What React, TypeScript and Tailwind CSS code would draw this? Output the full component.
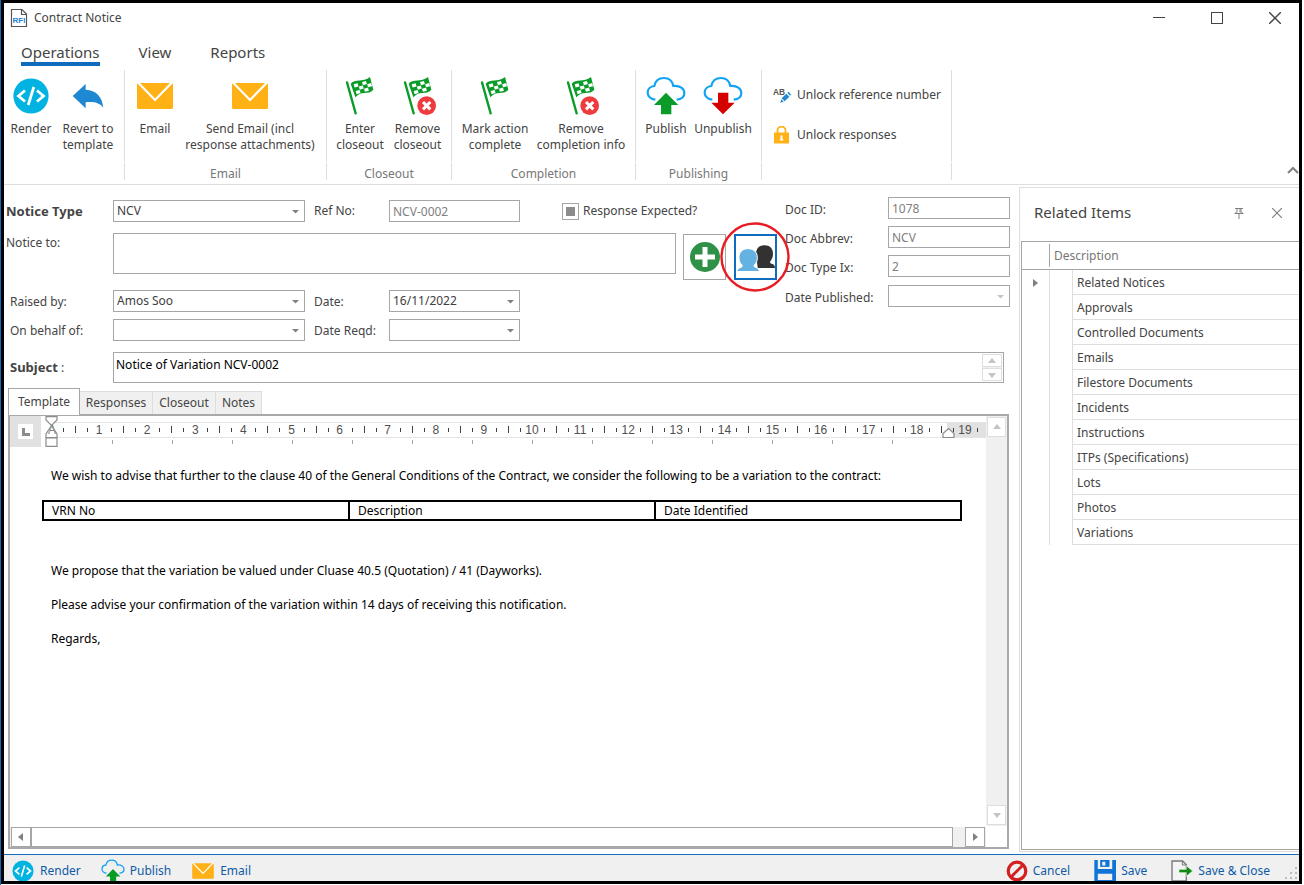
import React from "react";

/* ---------- icons ---------- */

type IconProps = { className?: string };

function RfiIcon() {
  return (
    <svg className="h-5 w-[18px]" viewBox="0 0 18 20" aria-hidden="true">
      <path d="M1.5 1.5h10.5l4.5 4.5v12.5h-15z" fill="#fff" stroke="#555" strokeWidth="1.2" />
      <path d="M11.5 1.5v5h5" fill="none" stroke="#555" strokeWidth="1.2" />
      <rect x="2" y="8" width="14" height="7" fill="#fff" />
      <text x="9" y="15" textAnchor="middle" fontSize="8" fontWeight="700" fill="#1f7fd6" fontFamily="Liberation Sans, sans-serif">
        RFI
      </text>
    </svg>
  );
}

function RenderIcon({ className }: IconProps) {
  return (
    <svg className={className} viewBox="-2 -2 40 40" aria-hidden="true">
      <circle cx="18" cy="18" r="17.6" fill="#00b3e1" />
      <path d="M12 12.5 5.5 18l6.500 5.500M24 12.500l6.500 5.500-6.500 5.500M20.800 9l-5.600 18" fill="none" stroke="#fff" strokeWidth="2.800" />
    </svg>
  );
}

function RevertIcon({ className }: IconProps) {
  return (
    <svg className={className} viewBox="-6 -6 120 120" aria-hidden="true">
      <path d="M8 54 47 18v17c32 1 50 22 53 54-14-17-30-18-53-16v18z" fill="#1e88d2" />
    </svg>
  );
}

function MailIcon({ className }: IconProps) {
  return (
    <svg className={className} viewBox="-2 -2 40 40" aria-hidden="true">
      <rect x="0" y="5" width="36" height="26" rx="1.5" fill="#ffb115" />
      <path d="M1 4.500 18 22 35 4.500" fill="none" stroke="#fff" strokeWidth="2.200" />
    </svg>
  );
}

const flagChecks = [
  [0, 0], [2, 0], [1, 1], [3, 1], [0, 2], [2, 2],
];

function Flag() {
  return (
    <>
      <path d="M15 16 41 109" stroke="#0a9b28" strokeWidth="7" fill="none" strokeLinecap="round" />
      <path d="M26 20C40 4 62 18 84 0L94 38C78 56 58 38 40 61z" fill="#0a9b28" />
      <g transform="matrix(12.500 -3.500 3 10 35 22)" fill="#fff">
        {flagChecks.map(([c, r]) => (
          <rect key={c + "-" + r} x={c} y={r} width="0.95" height="0.95" />
        ))}
      </g>
    </>
  );
}

function FlagIcon({ className }: IconProps) {
  return (
    <svg className={className} viewBox="-6 -3 120 120" aria-hidden="true">
      <Flag />
    </svg>
  );
}

function FlagRemoveIcon({ className }: IconProps) {
  return (
    <svg className={className} viewBox="-6 -3 120 120" aria-hidden="true">
      <Flag />
      <circle cx="80" cy="86" r="30" fill="#fff" />
      <circle cx="80" cy="86" r="28" fill="#ee3b3f" />
      <path d="m69 75 22 22M91 75 69 97" stroke="#fff" strokeWidth="9" />
    </svg>
  );
}

const cloudPath =
  "M28 67C14 66 5 56 5 46 5 35 14 27 25 26 28 10 40 2 54 2c14 0 25 9 28 24 20-2 33 8 33 21 0 12-9 19-23 20";

function PublishIcon({ className }: IconProps) {
  return (
    <svg className={className} viewBox="0 -4 120 120" aria-hidden="true">
      <path d={cloudPath} fill="none" stroke="#12a3f5" strokeWidth="6.500" />
      <path d="M60 46 97 83H76v28H45V83H24z" fill="#0a9b28" />
    </svg>
  );
}

function UnpublishIcon({ className }: IconProps) {
  return (
    <svg className={className} viewBox="0 -4 120 120" aria-hidden="true">
      <path d={cloudPath} fill="none" stroke="#12a3f5" strokeWidth="6.500" />
      <path d="M45 46h31v30h19L60 111 25 76h20z" fill="#d40000" />
    </svg>
  );
}

function ReferenceIcon() {
  return (
    <svg className="h-[18px] w-[18px]" viewBox="0 0 54 54" aria-hidden="true">
      <text x="0" y="26" fontSize="25" fontWeight="700" fill="#555" fontFamily="Liberation Sans, sans-serif">
        AB
      </text>
      <path d="m24 38 18-16 12 10-16 18-14 4z" fill="#fff" />
      <path d="m43 20 3-3 8 8-3 4zM40 23l9 9-14 14-9-9zM25 40l7 7-10 3z" fill="#1e88d2" />
    </svg>
  );
}

function LockIcon() {
  return (
    <svg className="h-[18px] w-[18px]" viewBox="0 0 18 18" aria-hidden="true">
      <path d="M4.500 8V4.500a4 4 0 0 1 8 0V8" fill="none" stroke="#ffb115" strokeWidth="1.800" />
      <rect x="1" y="6.500" width="15" height="11" rx="0.500" fill="#ffb115" />
      <path d="M7.500 9.500h2v3.800h.800v1.200H6.700v-1.200h.800z" fill="#fff" />
    </svg>
  );
}

function AddIcon() {
  return (
    <svg className="h-[30px] w-[30px] shrink-0" viewBox="0 0 30 30" aria-hidden="true">
      <circle cx="15" cy="15" r="15" fill="#2f9147" />
      <path d="M15 5v20M5 15h20" stroke="#fff" strokeWidth="5" />
    </svg>
  );
}

function PeopleIcon() {
  return (
    <svg className="h-[28px] w-[38px] shrink-0" viewBox="0 -6 114 84" aria-hidden="true">
      <path
        d="M82 1c17 0 26 10 26 25 0 10-3 17-8 23-2 4 0 6 4 7 7 2 10 5 10 13H62L57 22C60 8 69 1 82 1z"
        fill="#323232"
      />
      <path
        d="M33 11c18 0 28 11 28 27 0 10-3 16-9 22-2 3-1 5 3 7 8 2 12 6 12 14H0c0-8 4-12 12-14 4-2 5-4 3-7-6-6-9-12-9-22 0-16 10-27 27-27z"
        fill="#64b2e2"
        stroke="#fff"
        strokeWidth="3"
      />
    </svg>
  );
}

function CancelIcon() {
  return (
    <svg className="h-[22px] w-[22px]" viewBox="0 0 22 22" aria-hidden="true">
      <circle cx="11" cy="11" r="8.800" fill="none" stroke="#d31f1f" strokeWidth="3.200" />
      <path d="m5 17 12-12" stroke="#d31f1f" strokeWidth="3" />
    </svg>
  );
}

function SaveIcon() {
  return (
    <svg className="h-[22px] w-[22px]" viewBox="0 0 64 64" aria-hidden="true">
      <path d="M1 0h63v64H1z" fill="#0f74d6" />
      <path d="M11 0h42v26H11zM11 40h42v18H11z" fill="#f0f0f0" />
      <path d="M18 0h27v20H18z" fill="#0f74d6" />
      <path d="M24 5h9v11h-9z" fill="#f0f0f0" />
    </svg>
  );
}

function SaveCloseIcon() {
  return (
    <svg className="h-[22px] w-[22px]" viewBox="0 0 66 66" aria-hidden="true">
      <path d="M3 3h32l11 11v49H3z" fill="#f4f4f4" stroke="#777" strokeWidth="4" />
      <path d="M34 3v12h12" fill="none" stroke="#777" strokeWidth="3" />
      <path d="M24 28h22V17l19 16-19 16V38H24z" fill="#108a10" stroke="#f0f0f0" strokeWidth="2" />
    </svg>
  );
}

const triangles = {
  up: "M0 6 4 1l4 5z",
  down: "M0 2h8L4 7z",
  drop: "M0 2h7L3.500 5.500z",
  left: "M6 0v8L1 4z",
  right: "M2 0v8l5-4z",
};

function Triangle({ dir, light }: { dir: keyof typeof triangles; light?: boolean }) {
  return (
    <svg className="h-2 w-2" viewBox="0 0 8 8" aria-hidden="true">
      <path d={triangles[dir]} fill={light ? "#c4c4c4" : "#808080"} />
    </svg>
  );
}

/* ---------- ribbon ---------- */

function RibbonGroup({ caption, children, className }: { caption?: string; children: React.ReactNode; className?: string }) {
  return (
    <section className="flex flex-col gap-px" aria-label={caption || "Actions"}>
      <div className={"flex h-[92px] border-r border-[#dedede] pt-[6px] " + (className || "")}>{children}</div>
      <div className="h-[17px] border-r border-[#dedede] text-center leading-[22px] text-[#777]">{caption}</div>
    </section>
  );
}

function RibbonButton({ icon, lines, className }: { icon: React.ReactNode; lines: string[]; className?: string }) {
  return (
    <button type="button" className={"flex flex-col items-center gap-[5px] leading-4 " + (className || "")}>
      {icon}
      <span>
        {lines.map((l) => (
          <span key={l} className="block whitespace-nowrap">
            {l}
          </span>
        ))}
      </span>
    </button>
  );
}

function Ribbon() {
  return (
    <div className="flex h-[115px] border-b border-[#dedede]">
      <RibbonGroup className="w-[121px] pl-[6px]">
        <RibbonButton className="w-[42px]" icon={<RenderIcon className="h-10 w-10" />} lines={["Render"]} />
        <RibbonButton className="w-[72px]" icon={<RevertIcon className="h-10 w-10" />} lines={["Revert to", "template"]} />
      </RibbonGroup>
      <RibbonGroup caption="Email" className="w-[202px] pl-[6px]">
        <RibbonButton className="w-12" icon={<MailIcon className="h-10 w-10" />} lines={["Email"]} />
        <RibbonButton className="w-[142px]" icon={<MailIcon className="h-10 w-10" />} lines={["Send Email (incl", "response attachments)"]} />
      </RibbonGroup>
      <RibbonGroup caption="Closeout" className="w-[125px] pl-[4px]">
        <RibbonButton className="w-[58px]" icon={<FlagIcon className="h-10 w-10" />} lines={["Enter", "closeout"]} />
        <RibbonButton className="w-[57px]" icon={<FlagRemoveIcon className="h-10 w-10" />} lines={["Remove", "closeout"]} />
      </RibbonGroup>
      <RibbonGroup caption="Completion" className="w-[184px] pl-[4px]">
        <RibbonButton className="w-[78px]" icon={<FlagIcon className="h-10 w-10" />} lines={["Mark action", "complete"]} />
        <RibbonButton className="w-[94px]" icon={<FlagRemoveIcon className="h-10 w-10" />} lines={["Remove", "completion info"]} />
      </RibbonGroup>
      <RibbonGroup caption="Publishing" className="w-[126px] pl-[4px]">
        <RibbonButton className="w-[52px]" icon={<PublishIcon className="h-10 w-10" />} lines={["Publish"]} />
        <RibbonButton className="w-[62px]" icon={<UnpublishIcon className="h-10 w-10" />} lines={["Unpublish"]} />
      </RibbonGroup>
      <RibbonGroup className="w-[190px] flex-col gap-2 pl-[11px]">
        <button type="button" className="mt-[3px] flex h-8 items-center gap-[6px] whitespace-nowrap">
          <ReferenceIcon />
          Unlock reference number
        </button>
        <button type="button" className="flex h-8 items-center gap-[6px] whitespace-nowrap">
          <LockIcon />
          Unlock responses
        </button>
      </RibbonGroup>
      <button type="button" aria-label="Collapse ribbon" className="ml-auto self-end pb-[10px]">
        <svg className="h-2 w-3" viewBox="0 0 12 8" aria-hidden="true">
          <path d="m1 7 5-5 5 5" fill="none" stroke="#808080" strokeWidth="2" />
        </svg>
      </button>
    </div>
  );
}

/* ---------- form ---------- */

const fieldBox = "h-[22px] border border-[#a6a6a6] bg-white px-[3px] text-[12px]";

function Select({ id, value, width, disabled }: { id: string; value: string; width: string; disabled?: boolean }) {
  return (
    <div className={"relative shrink-0 " + width}>
      <select id={id} disabled={disabled} className={fieldBox + " block w-full appearance-none text-[#404040] outline-none"}>
        <option>{value}</option>
      </select>
      <span className="pointer-events-none absolute top-2 right-[5px]">
        <Triangle dir="drop" light={disabled} />
      </span>
    </div>
  );
}

function Label({ id, children, className }: { id: string; children: React.ReactNode; className?: string }) {
  return (
    <label htmlFor={id} className={"shrink-0 whitespace-nowrap " + (className || "")}>
      {children}
    </label>
  );
}

function ContractForm() {
  return (
    <form className="pt-3 pr-[9px]" onSubmit={(e) => e.preventDefault()}>
      <div className="flex gap-2">
        <div className="flex min-w-0 flex-1 flex-col pt-[3px]">
          <div className="flex items-center">
            <Label id="type" className="w-[109px] pt-px pl-[2px] text-[13px] font-bold">Notice Type</Label>
            <Select id="type" value="NCV" width="w-[192px]" />
            <Label id="ref" className="w-[84px] pl-[9px]">Ref No:</Label>
            <input id="ref" disabled defaultValue="NCV-0002" className={fieldBox + " w-[131px] shrink-0 text-[#808080]"} />
            <div className="ml-[42px] flex shrink-0 items-center gap-1">
              <span className="relative flex h-[17px] w-[17px]">
                <input id="resp" type="checkbox" className="h-[17px] w-[17px] appearance-none border border-[#a6a6a6]" />
                <span className="pointer-events-none absolute inset-1 bg-[#8c8c8c]" />
              </span>
              <Label id="resp">Response Expected?</Label>
            </div>
          </div>
          <div className="mt-[11px] flex items-start">
            <Label id="to" className="w-[109px] pl-[2px] leading-5">Notice to:</Label>
            <textarea id="to" className="block h-[41px] min-w-0 flex-1 resize-none border border-[#a6a6a6] outline-none" />
            <button type="button" aria-label="Add recipient" className="mt-px ml-[7px] flex h-[46px] w-[43px] shrink-0 items-center justify-center border border-[#a6a6a6]">
              <AddIcon />
            </button>
            <div className="relative mt-px ml-2 shrink-0">
              <button type="button" aria-label="Choose contacts" className="flex h-[46px] w-[43px] items-center justify-center border-2 border-[#0f6cbd] bg-white">
                <PeopleIcon />
              </button>
              <svg className="pointer-events-none absolute -top-3 -left-[14px] z-10 h-[70px] w-[70px]" viewBox="0 0 70 70" aria-hidden="true">
                <circle cx="35" cy="35" r="33.500" fill="none" stroke="#e81c24" strokeWidth="2.400" />
              </svg>
            </div>
          </div>
          <div className="mt-[10px] flex items-center">
            <Label id="by" className="w-[109px] pt-px pl-[6px]">Raised by:</Label>
            <Select id="by" value="Amos Soo" width="w-[192px]" />
            <Label id="date" className="w-[84px] pt-px pl-[9px]">Date:</Label>
            <Select id="date" value="16/11/2022" width="w-[131px]" />
          </div>
          <div className="mt-[7px] flex items-center">
            <Label id="behalf" className="w-[109px] pt-px pl-[6px]">On behalf of:</Label>
            <Select id="behalf" value="" width="w-[192px]" />
            <Label id="reqd" className="w-[84px] pt-px pl-[9px]">Date Reqd:</Label>
            <Select id="reqd" value="" width="w-[131px]" />
          </div>
        </div>
        <div className="flex w-[225px] shrink-0 flex-col gap-[7px]">
          {[
            ["docid", "Doc ID:", "1078"],
            ["abbrev", "Doc Abbrev:", "NCV"],
            ["typeix", "Doc Type Ix:", "2"],
          ].map(([id, label, value]) => (
            <div key={id} className="flex h-[22px] items-center justify-between">
              <Label id={id} className="pt-1">{label}</Label>
              <input id={id} disabled defaultValue={value} className={fieldBox + " w-[122px] text-[#808080]"} />
            </div>
          ))}
          <div className="mt-px flex h-[22px] items-center justify-between">
            <Label id="published" className="pt-1">Date Published:</Label>
            <Select id="published" value="" width="w-[122px]" disabled />
          </div>
        </div>
      </div>
      <div className="mt-[11px] flex items-center pr-[6px]">
        <Label id="subject" className="w-[109px] pt-px pl-[6px]">
          <b className="text-[13px]">Subject</b> :
        </Label>
        <div className="flex h-[31px] min-w-0 flex-1 border border-[#a6a6a6] p-px">
          <textarea
            id="subject"
            defaultValue="Notice of Variation NCV-0002"
            className="min-w-0 flex-1 resize-none overflow-hidden px-px pt-[3px] leading-4 text-black outline-none"
          />
          <div className="flex w-5 flex-col justify-between bg-[#f0f0f0]">
            {(["up", "down"] as const).map((d) => (
              <button key={d} type="button" aria-label={"Scroll " + d} className="flex h-[13px] items-center justify-center border border-[#dedede] bg-white">
                <Triangle dir={d} light />
              </button>
            ))}
          </div>
        </div>
      </div>
    </form>
  );
}

/* ---------- editor ---------- */

const unit = 48.1;
const origin = 10;

function Ruler() {
  const numbers = Array.from({ length: 19 }, (_, i) => i + 1);
  return (
    <div className="flex h-[31px] shrink-0">
      <div className="flex w-[31px] shrink-0 items-center justify-center bg-[#e1e1e1]">
        <span className="flex h-[15px] w-[15px] items-center justify-center bg-white">
          <span className="h-[8px] w-[8px] border-b-3 border-l-3 border-[#8c8c8c]" />
        </span>
      </div>
      <svg className="h-[31px] min-w-0 flex-1" aria-hidden="true">
        <rect x="906" y="6" width="39" height="16" fill="#e1e1e1" />
        <path d="M10 6.500H945M10 21.500H945" stroke="#e4e4e4" />
        <g fontFamily="Liberation Sans, sans-serif" fontSize="12" fill="#505050" textAnchor="middle">
          <text x="11" y="18">A</text>
          {numbers.map((n) => (
            <text key={n} x={origin + n * unit} y="18">
              {n}
            </text>
          ))}
        </g>
        <g fill="#404040">
          {Array.from({ length: 19 }, (_, i) => (
            <g key={i}>
              <rect x={Math.round(origin + (i + 0.25) * unit)} y="12" width="1" height="4" />
              <rect x={Math.round(origin + (i + 0.5) * unit)} y="10" width="1" height="7" />
              <rect x={Math.round(origin + (i + 0.75) * unit)} y="12" width="1" height="4" />
            </g>
          ))}
          <rect x="936" y="12" width="1" height="4" />
        </g>
        <g fill="#a6a6a6">
          {Array.from({ length: 14 }, (_, i) => (
            <rect key={i} x={71 + i * 60} y="24" width="1" height="4" />
          ))}
        </g>
        <g fill="#fff" fillOpacity="0.85" stroke="#8c8c8c" strokeWidth="1.200">
          <path d="M5 .600h11v3.400l-5.500 5.500L5 4z" />
          <path d="M10.500 9.500 16 18v3.500H5V18z" fillOpacity="0.300" />
          <path d="M5 22h11v8.400H5z" />
          <path d="m907.500 12.500 5.500 5v4h-11v-4z" fillOpacity="1" />
        </g>
      </svg>
    </div>
  );
}

function EditorDocument() {
  return (
    <div className="min-h-0 flex-1 pr-6 pl-8 text-[12px] leading-[17px] text-black">
      <p className="mt-5 pl-[9px]">
        We wish to advise that further to the clause 40 of the General Conditions of the Contract, we consider the following to be a variation to the contract:
      </p>
      <table className="mt-4 mb-[41px] w-full table-fixed border-collapse border-2 border-black">
        <tbody>
          <tr>
            {["VRN No", "Description", "Date Identified"].map((c) => (
              <td key={c} className="h-[19px] border-2 border-black px-2 leading-4">
                {c}
              </td>
            ))}
          </tr>
        </tbody>
      </table>
      <div className="flex flex-col gap-[17px] pl-[9px]">
        <p>We propose that the variation be valued under Cluase 40.5 (Quotation) / 41 (Dayworks).</p>
        <p>Please advise your confirmation of the variation within 14 days of receiving this notification.</p>
        <p>Regards,</p>
      </div>
    </div>
  );
}

const idleTab = "h-[23px] border border-l-0 border-b-0 border-[#dedede] bg-[#f0f0f0] ";

function Editor() {
  return (
    <div className="mr-[10px] mb-[5px] ml-1 flex flex-1 flex-col pt-[5px]">
      <div role="tablist" className="flex items-end">
        <button type="button" role="tab" aria-selected="true" className="relative z-10 -mb-px h-[27px] w-[72px] border border-b-0 border-[#a6a6a6] bg-white">
          Template
        </button>
        <button type="button" role="tab" aria-selected="false" className={idleTab + "w-[73px]"}>
          Responses
        </button>
        <button type="button" role="tab" aria-selected="false" className={idleTab + "w-[63px]"}>
          Closeout
        </button>
        <button type="button" role="tab" aria-selected="false" className={idleTab + "w-[46px]"}>
          Notes
        </button>
      </div>
      <div className="flex flex-1 border-2 border-[#a9a9a9]">
        <div className="flex min-w-0 flex-1 flex-col">
          <Ruler />
          <EditorDocument />
          <div className="flex h-5 bg-[#f0f0f0]">
            <button type="button" aria-label="Scroll left" className="ml-px flex w-5 items-center justify-center border border-[#a6a6a6] bg-white">
              <Triangle dir="left" />
            </button>
            <div className="flex-1 border border-[#a6a6a6] bg-white" />
            <button type="button" aria-label="Scroll right" className="mr-px ml-3 flex w-5 items-center justify-center border border-[#a6a6a6] bg-white">
              <Triangle dir="right" />
            </button>
          </div>
        </div>
        <div className="mb-[21px] flex w-[21px] shrink-0 flex-col justify-between bg-[#f0f0f0]">
          <button type="button" aria-label="Scroll up" className="m-px flex h-5 items-center justify-center border border-[#dedede] bg-white">
            <Triangle dir="up" light />
          </button>
          <button type="button" aria-label="Scroll down" className="m-px flex h-5 items-center justify-center border border-[#dedede] bg-white">
            <Triangle dir="down" light />
          </button>
        </div>
      </div>
    </div>
  );
}

/* ---------- related items ---------- */

const related = [
  "Related Notices", "Approvals", "Controlled Documents", "Emails", "Filestore Documents", "Incidents",
  "Instructions", "ITPs (Specifications)", "Lots", "Photos", "Variations",
];

function RelatedItems() {
  return (
    <aside className="mt-[2px] mb-[2px] flex w-[280px] shrink-0 flex-col border border-r-0 border-[#dedede] pb-px pl-px">
      <div className="flex h-[53px] items-center pr-[17px] pb-1 pl-[13px]">
        <h2 className="flex-1 text-[15px]">Related Items</h2>
        <button type="button" aria-label="Pin panel" className="mr-7">
          <svg className="h-3 w-[10px]" viewBox="0 0 10 12" fill="none" stroke="#808080" aria-hidden="true">
            <path d="M1 1.500h8M3 1.500v4M7 1.500v4M6 1.500v4M.500 6.500h9M1.500 6l1-1M8.500 6l-1-1M5 7v5" />
          </svg>
        </button>
        <button type="button" aria-label="Close panel">
          <svg className="h-[10px] w-[10px]" viewBox="0 0 10 10" fill="none" stroke="#808080" strokeWidth="1.200" aria-hidden="true">
            <path d="m0 0 10 10M10 0 0 10" />
          </svg>
        </button>
      </div>
      <div className="flex-1 border border-r-0 border-[#a6a6a6]">
        <table className="w-full border-separate border-spacing-0">
          <thead>
            <tr>
              <th className="h-7 w-7 border-b border-[#a6a6a6] p-0 py-[2px]">
                <div className="h-[23px] border-r border-[#a6a6a6]" />
              </th>
              <th colSpan={2} className="border-b border-[#a6a6a6] py-0 pl-1 text-left font-normal text-[#777]">
                Description
              </th>
            </tr>
          </thead>
          <tbody>
            {related.map((item, i) => (
              <tr key={item}>
                <td className="h-[25px] w-7 border-r border-[#dedede] p-0">
                  {i === 0 && (
                    <span className="flex pl-[9px]">
                      <Triangle dir="right" />
                    </span>
                  )}
                </td>
                <td className="w-[23px] border-r border-[#dedede] p-0" />
                <td className="border-b border-[#dedede] pt-[2px] pb-0 pl-1">{item}</td>
              </tr>
            ))}
          </tbody>
        </table>
      </div>
    </aside>
  );
}

/* ---------- window ---------- */

function FooterButton({ icon, children }: { icon: React.ReactNode; children: React.ReactNode }) {
  return (
    <button type="button" className="flex h-[27px] items-center gap-[5px] pt-1 whitespace-nowrap text-[#0f5aa5]">
      {icon}
      {children}
    </button>
  );
}

export default function App() {
  return (
    <div className="flex min-h-screen bg-white pr-[2px] pb-px pl-px font-['Noto_Sans',sans-serif] text-[12px] text-[#444] shadow-[inset_1px_0_0_#0f6cbd]">
      <div className="flex min-w-0 flex-1 flex-col overflow-hidden border-3 border-black">
        <header className="flex h-[29px] items-center pl-[6px]">
          <RfiIcon />
          <h1 className="ml-[6px] flex-1">Contract Notice</h1>
          <div className="flex gap-[10px] text-[#444]">
            <button type="button" aria-label="Minimize" className="flex h-7 w-12 items-center justify-center">
              <span className="h-px w-3 bg-[#444]" />
            </button>
            <button type="button" aria-label="Maximize" className="flex h-7 w-12 items-center justify-center">
              <span className="h-3 w-3 border border-[#444]" />
            </button>
            <button type="button" aria-label="Close" className="flex h-7 w-12 items-center justify-center">
              <svg className="h-3 w-3" viewBox="0 0 12 12" fill="none" stroke="#444" strokeWidth="1.400" aria-hidden="true">
                <path d="m0 0 12 12M12 0 0 12" />
              </svg>
            </button>
          </div>
        </header>
        <nav className="flex h-[38px] items-start gap-[39px] pt-[10px] pl-[17px] text-[15px] leading-5">
          <a href="#operations" className="border-b-4 border-[#0f6cbd]">Operations</a>
          <a href="#view">View</a>
          <a href="#reports">Reports</a>
        </nav>
        <Ribbon />
        <main className="flex flex-1">
          <div className="flex min-w-0 flex-1 flex-col">
            <ContractForm />
            <Editor />
          </div>
          <RelatedItems />
        </main>
        <footer className="relative flex h-[27px] gap-5 border-t border-[#0f6cbd] bg-[#f0f0f0] pr-[29px] pl-[7px]">
          <FooterButton icon={<RenderIcon className="h-6 w-6" />}>Render</FooterButton>
          <FooterButton icon={<PublishIcon className="h-6 w-6" />}>Publish</FooterButton>
          <FooterButton icon={<MailIcon className="h-6 w-6" />}>Email</FooterButton>
          <div className="ml-auto flex gap-6">
            <FooterButton icon={<CancelIcon />}>Cancel</FooterButton>
            <FooterButton icon={<SaveIcon />}>Save</FooterButton>
            <FooterButton icon={<SaveCloseIcon />}>Save &amp; Close</FooterButton>
          </div>
          <svg className="absolute right-[2px] bottom-[2px] h-3 w-3" viewBox="0 0 12 12" fill="#bdbdbd" aria-hidden="true">
            <path d="M10 0h2v2h-2zM10 5h2v2h-2zM10 10h2v2h-2zM5 5h2v2H5zM5 10h2v2H5zM0 10h2v2H0z" />
          </svg>
        </footer>
      </div>
    </div>
  );
}
